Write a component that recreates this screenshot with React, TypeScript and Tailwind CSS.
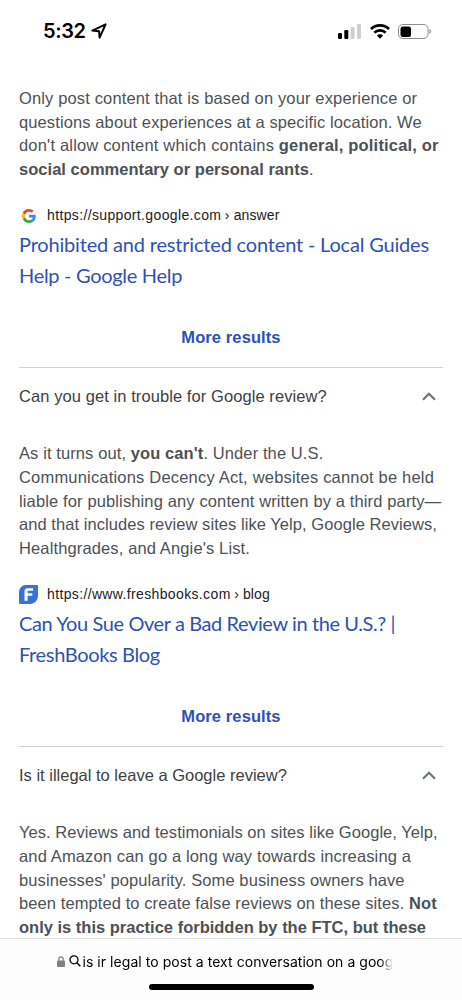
import type { ReactNode } from "react";

function StatusBar() {
    return (
        <header className="flex h-[62px] shrink-0 items-center pr-[31px] pl-[43px] text-black">
            <span className="font-['Inter',sans-serif] text-[20px] leading-6 font-semibold tracking-[-0.4px]">
                5:32
            </span>
            <svg className="ml-[5px] h-4 w-4" viewBox="0 0 16 16" fill="none">
                <path
                    d="M14.6 1.3 1.3 7.6l6.8.7.5 6.3z"
                    stroke="currentColor"
                    strokeWidth="2"
                    strokeLinejoin="round"
                />
            </svg>
            <svg className="ml-auto h-[15px] w-[23px]" viewBox="0 0 23 15">
                <rect x="0" y="9" width="4" height="6" rx="1.2" />
                <rect x="6.3" y="6" width="4" height="9" rx="1.2" />
                <rect x="12.6" y="3" width="4" height="12" rx="1.2" fill="#cfcfcf" />
                <rect x="19" y="0" width="4" height="15" rx="1.2" fill="#cfcfcf" />
            </svg>
            <svg className="ml-[9px] h-[15px] w-5" viewBox="0 0 20 15" fill="none">
                <path d="M1 5.1a12.8 12.8 0 0 1 18 0" stroke="#000" strokeWidth="2.8" />
                <path d="M4.3 8.7a8.1 8.1 0 0 1 11.4 0" stroke="#000" strokeWidth="2.6" />
                <path d="M10 14.7 6.9 11.6a4.4 4.4 0 0 1 6.2 0z" fill="#000" />
            </svg>
            <svg className="ml-2 h-[15px] w-[33px]" viewBox="0 0 33 15" fill="none">
                <rect x=".5" y=".5" width="29.5" height="14" rx="4.3" stroke="#8e8e8e" />
                <rect x="2.5" y="2.5" width="10.5" height="10.5" rx="2.2" fill="#000" />
                <path d="M31.4 5v5c2-.8 2-4.2 0-5z" fill="#8e8e8e" />
            </svg>
        </header>
    );
}

function GoogleIcon() {
    return (
        <svg className="h-[14px] w-[14px]" viewBox="0 0 48 48">
            <path fill="#EA4335" d="M24 9.5c3.54 0 6.71 1.22 9.21 3.6l6.85-6.85C35.9 2.38 30.47 0 24 0 14.62 0 6.51 5.38 2.56 13.22l7.98 6.19C12.43 13.72 17.74 9.5 24 9.5z" />
            <path fill="#4285F4" d="M46.98 24.55c0-1.57-.15-3.09-.38-4.55H24v9.02h12.94c-.58 2.96-2.26 5.48-4.78 7.18l7.73 6c4.51-4.18 7.09-10.36 7.09-17.65z" />
            <path fill="#FBBC05" d="M10.53 28.59A14.5 14.5 0 0 1 9.77 24c0-1.6.27-3.14.76-4.59l-7.98-6.19A23.9 23.9 0 0 0 0 24c0 3.88.92 7.54 2.56 10.78z" />
            <path fill="#34A853" d="M24 48c6.48 0 11.93-2.13 15.89-5.81l-7.73-6c-2.15 1.45-4.92 2.3-8.16 2.3-6.26 0-11.57-4.22-13.47-9.91l-7.98 6.19C6.51 42.62 14.62 48 24 48z" />
        </svg>
    );
}

function FreshBooksIcon() {
    return (
        <svg className="h-[19px] w-[19px]" viewBox="0 0 19 19">
            <path d="M7 0h11a1 1 0 0 1 1 1v10a8 8 0 0 1-8 8H1a1 1 0 0 1-1-1V7a7 7 0 0 1 7-7z" fill="#3871d8" />
            <path d="M5.5 15.8V6.2c0-2 1-3 3-3h5.6v2.6H9.6c-.7 0-1 .3-1 1v1.4h4.7v2.6H8.6v5z" fill="#fff" />
        </svg>
    );
}

function Answer({ children }: { children: ReactNode }) {
    return (
        <p className="text-[16.5px] leading-[23.7px] whitespace-nowrap text-[#4d5156]">
            {children}
        </p>
    );
}

function Source({
    icon,
    host,
    path,
    children,
}: {
    icon: ReactNode;
    host: string;
    path: string;
    children: ReactNode;
}) {
    return (
        <>
            <div className="mt-[24px] flex h-5 items-center text-[14px] whitespace-nowrap text-[#202124]">
                <span className="mr-[9px] flex w-[19px] justify-center">
                    {icon}
                </span>
                <span className="tracking-[0.36px]">{host}</span>
                <span className="ml-[3.5px] tracking-[0.12px]">› {path}</span>
            </div>
            <h3 className="mt-[3.5px] font-['Lato',sans-serif] text-[20px] leading-[31px] whitespace-nowrap text-[#2f50b5]">
                {children}
            </h3>
            <div className="mt-[30.5px] flex h-[31px] items-center justify-center text-[16.5px] font-bold tracking-[0.1px] text-[#2f50b5]">
                More results
            </div>
        </>
    );
}

function Question({ children }: { children: ReactNode }) {
    return (
        <div className="mt-[14px] mb-[17.5px] flex h-[58px] items-center justify-between border-t border-[#cfd1d4] pr-[7px] text-[16.5px] whitespace-nowrap text-[#3c4043]">
            {children}
            <svg className="h-[9px] w-[14px]" viewBox="0 0 14 9" fill="none">
                <path d="m1 7.8 6-6 6 6" stroke="#70757a" strokeWidth="2.2" />
            </svg>
        </div>
    );
}

export default function App() {
    return (
        <div className="flex h-[1000px] w-[462px] flex-col overflow-hidden bg-white font-['Liberation_Sans',sans-serif]">
            <StatusBar />
            <main className="min-h-0 flex-1 overflow-hidden px-[19px] pt-[24.8px]">
                <Answer>
                    <span className="tracking-[0.14px]">
                        Only post content that is based on your experience or
                    </span>
                    <br />
                    <span className="tracking-[0.11px]">
                        questions about experiences at a specific location. We
                    </span>
                    <br />
                    <span className="tracking-[0.18px]">
                        don't allow content which contains{" "}
                        <b>general, political, or</b>
                    </span>
                    <br />
                    <span className="tracking-[0.03px]">
                        <b>social commentary or personal rants</b>.
                    </span>
                </Answer>
                <Source
                    icon={<GoogleIcon />}
                    host="https://support.google.com"
                    path="answer"
                >
                    <span className="tracking-[-0.18px]">
                        Prohibited and restricted content - Local Guides
                    </span>
                    <br />
                    <span className="tracking-[-0.3px]">Help - Google Help</span>
                </Source>

                <Question>
                    <span className="tracking-[0.08px]">
                        Can you get in trouble for Google review?
                    </span>
                </Question>
                <Answer>
                    <span className="tracking-[0.1px]">
                        As it turns out, <b>you can't</b>. Under the U.S.
                    </span>
                    <br />
                    <span className="tracking-[0.19px]">
                        Communications Decency Act, websites cannot be held
                    </span>
                    <br />
                    <span className="tracking-[0.13px]">
                        liable for publishing any content written by a third party—
                    </span>
                    <br />
                    <span className="tracking-[0.06px]">
                        and that includes review sites like Yelp, Google Reviews,
                    </span>
                    <br />
                    <span className="tracking-[0.13px]">
                        Healthgrades, and Angie's List.
                    </span>
                </Answer>
                <Source
                    icon={<FreshBooksIcon />}
                    host="https://www.freshbooks.com"
                    path="blog"
                >
                    <span className="tracking-[-0.4px]">
                        Can You Sue Over a Bad Review in the U.S.? |
                    </span>
                    <br />
                    <span className="tracking-[-0.35px]">FreshBooks Blog</span>
                </Source>

                <Question>Is it illegal to leave a Google review?</Question>
                <Answer>
                    <span className="tracking-[0.05px]">
                        Yes. Reviews and testimonials on sites like Google, Yelp,
                    </span>
                    <br />
                    <span className="tracking-[0.14px]">
                        and Amazon can go a long way towards increasing a
                    </span>
                    <br />
                    <span className="tracking-[0.1px]">
                        businesses' popularity. Some business owners have
                    </span>
                    <br />
                    <span className="tracking-[0.09px]">
                        been tempted to create false reviews on these sites.{" "}
                        <b>Not</b>
                    </span>
                    <br />
                    <b>only is this practice forbidden by the FTC, but these</b>
                </Answer>
            </main>

            <footer className="flex h-[62px] shrink-0 flex-col items-center border-t border-[#dedede] bg-[#fdfdfd]">
                <div className="mt-3 flex h-5 w-full items-center pl-[57px] text-black">
                    <svg className="mr-1 h-[11px] w-2 shrink-0" viewBox="0 0 8 11" fill="none">
                        <rect y="4.5" width="8" height="6.5" rx="1" fill="#808080" />
                        <path d="M1.8 5V3a2.2 2.2 0 0 1 4.4 0v2" stroke="#808080" strokeWidth="1.2" />
                    </svg>
                    <svg className="mr-[1.5px] h-3 w-3 shrink-0" viewBox="0 0 12 12" fill="none">
                        <circle cx="5" cy="4.8" r="4" stroke="#000" strokeWidth="1.3" />
                        <path d="m7.8 7.8 3.5 3.5" stroke="#000" strokeWidth="1.4" />
                    </svg>
                    <span className="bg-linear-to-r from-black from-96% to-transparent bg-clip-text font-['Inter',sans-serif] text-[14px] tracking-[0.05px] whitespace-nowrap text-transparent">
                        is ir legal to post a text conversation on a goog
                    </span>
                </div>
                <div className="mt-[13px] h-[6px] w-[165px] rounded-full bg-black" />
            </footer>
        </div>
    );
}
